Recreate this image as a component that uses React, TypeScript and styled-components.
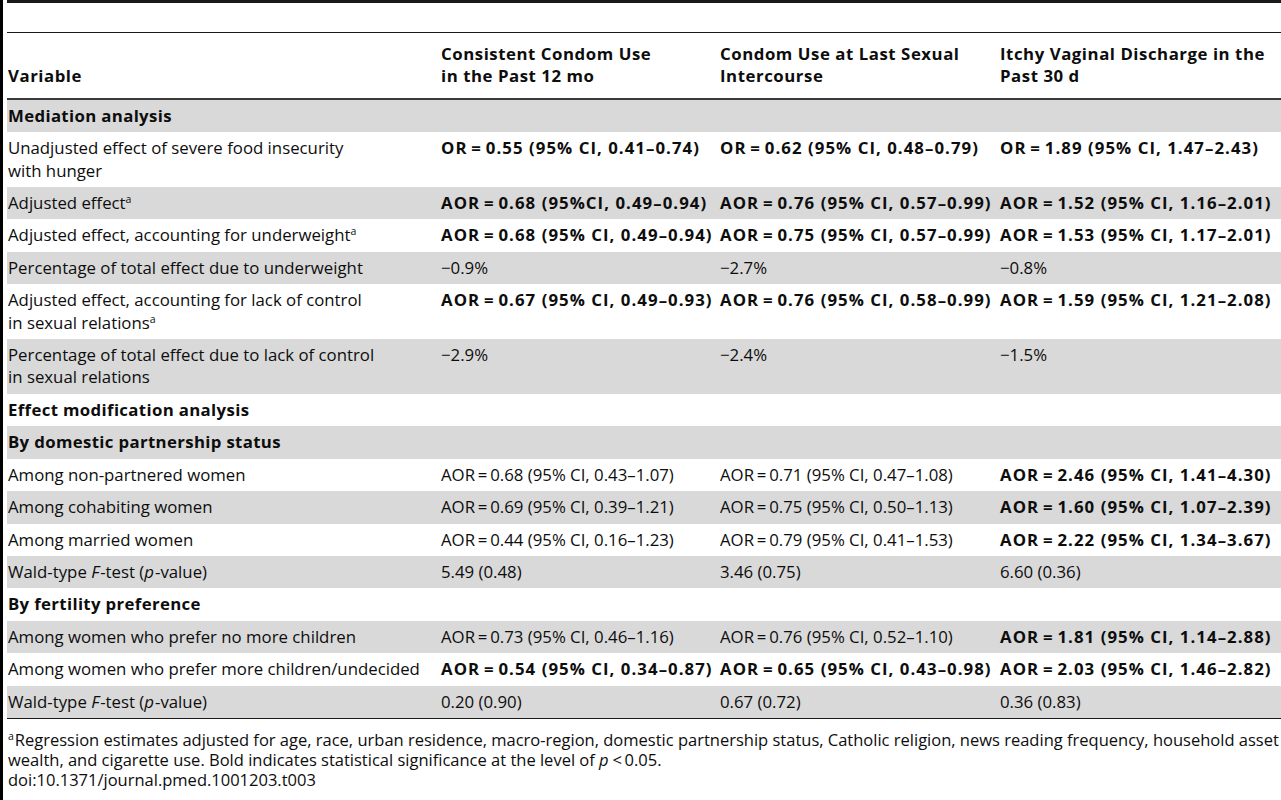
import styled, { createGlobalStyle } from 'styled-components';

const GlobalStyle = createGlobalStyle`
  html, body {
    margin: 0;
    padding: 0;
    background: #ffffff;
    overflow: hidden;
  }
  body {
    font-family: "Open Sans", "DejaVu Sans", sans-serif;
    color: #0d0d0d;
  }
`;

const Page = styled.div`
  border-left: 3px solid #000000;
  padding-left: 4px;
  min-height: 800px;
  box-sizing: border-box;
`;

const Table = styled.table`
  width: 1274px;
  border-collapse: collapse;
  table-layout: fixed;
  font-size: 16.8px;
  line-height: 22.4px;
  border-top: 3px solid #1a1a1a;
`;

const SpacerRow = styled.tr`
  height: 31px;
  border-bottom: 1.5px solid #1a1a1a;
`;

const HeadRow = styled.tr`
  border-bottom: 2px solid #3a3a3a;
`;

const HeadCell = styled.th`
  text-align: left;
  vertical-align: bottom;
  font-weight: 700;
  letter-spacing: 0.55px;
  padding: 10px 2px 10px 1px;
  white-space: nowrap;
`;

const Row = styled.tr<{ $shaded: boolean }>`
  background: ${p => (p.$shaded ? '#d9d9d9' : '#ffffff')};
  &:last-child {
    border-bottom: 1.5px solid #1a1a1a;
  }
`;

const Cell = styled.td<{ $bold?: boolean }>`
  vertical-align: top;
  padding: 5px 2px 5px 1px;
  font-weight: ${p => (p.$bold ? 700 : 400)};
  letter-spacing: ${p => (p.$bold ? '1.05px' : '0')};
  white-space: nowrap;
  overflow: hidden;
`;

const LabelCell = styled.td<{ $bold?: boolean }>`
  vertical-align: top;
  padding: 5px 2px 5px 1px;
  font-weight: ${p => (p.$bold ? 700 : 400)};
  letter-spacing: ${p => (p.$bold ? '0.35px' : '0')};
  white-space: nowrap;
`;

const Sup = styled.sup`
  font-size: 10.5px;
  line-height: 0;
  vertical-align: 6px;
  margin-right: 1px;
`;

const Footnotes = styled.div`
  font-size: 16.5px;
  line-height: 20px;
  padding: 11px 0 0 1px;
  width: 1276px;
`;

const Note = styled.div``;

const Em = styled.i`
  margin-right: 1px;
`;

const Doi = styled.div``;

type Value = { text: string; bold?: boolean };
type Data = {
  label: React.ReactNode;
  section?: boolean;
  values?: Value[];
};

const eq = '\u2009=\u2009';
const b = (t: string): Value => ({ text: t, bold: true });
const n = (t: string): Value => ({ text: t });
const A = <Sup>a</Sup>;
const wald = (
  <>
    Wald-type <Em>F</Em>-test (<Em>p</Em>-value)
  </>
);

const rows: Data[] = [
  { label: 'Mediation analysis', section: true },
  {
    label: (
      <>
        Unadjusted effect of severe food insecurity
        <br />
        with hunger
      </>
    ),
    values: [
      b(`OR${eq}0.55 (95% CI, 0.41–0.74)`),
      b(`OR${eq}0.62 (95% CI, 0.48–0.79)`),
      b(`OR${eq}1.89 (95% CI, 1.47–2.43)`),
    ],
  },
  {
    label: <>Adjusted effect{A}</>,
    values: [
      b(`AOR${eq}0.68 (95%CI, 0.49–0.94)`),
      b(`AOR${eq}0.76 (95% CI, 0.57–0.99)`),
      b(`AOR${eq}1.52 (95% CI, 1.16–2.01)`),
    ],
  },
  {
    label: <>Adjusted effect, accounting for underweight{A}</>,
    values: [
      b(`AOR${eq}0.68 (95% CI, 0.49–0.94)`),
      b(`AOR${eq}0.75 (95% CI, 0.57–0.99)`),
      b(`AOR${eq}1.53 (95% CI, 1.17–2.01)`),
    ],
  },
  {
    label: 'Percentage of total effect due to underweight',
    values: [n('−0.9%'), n('−2.7%'), n('−0.8%')],
  },
  {
    label: (
      <>
        Adjusted effect, accounting for lack of control
        <br />
        in sexual relations{A}
      </>
    ),
    values: [
      b(`AOR${eq}0.67 (95% CI, 0.49–0.93)`),
      b(`AOR${eq}0.76 (95% CI, 0.58–0.99)`),
      b(`AOR${eq}1.59 (95% CI, 1.21–2.08)`),
    ],
  },
  {
    label: (
      <>
        Percentage of total effect due to lack of control
        <br />
        in sexual relations
      </>
    ),
    values: [n('−2.9%'), n('−2.4%'), n('−1.5%')],
  },
  { label: 'Effect modification analysis', section: true },
  { label: 'By domestic partnership status', section: true },
  {
    label: 'Among non-partnered women',
    values: [
      n(`AOR${eq}0.68 (95% CI, 0.43–1.07)`),
      n(`AOR${eq}0.71 (95% CI, 0.47–1.08)`),
      b(`AOR${eq}2.46 (95% CI, 1.41–4.30)`),
    ],
  },
  {
    label: 'Among cohabiting women',
    values: [
      n(`AOR${eq}0.69 (95% CI, 0.39–1.21)`),
      n(`AOR${eq}0.75 (95% CI, 0.50–1.13)`),
      b(`AOR${eq}1.60 (95% CI, 1.07–2.39)`),
    ],
  },
  {
    label: 'Among married women',
    values: [
      n(`AOR${eq}0.44 (95% CI, 0.16–1.23)`),
      n(`AOR${eq}0.79 (95% CI, 0.41–1.53)`),
      b(`AOR${eq}2.22 (95% CI, 1.34–3.67)`),
    ],
  },
  { label: wald, values: [n('5.49 (0.48)'), n('3.46 (0.75)'), n('6.60 (0.36)')] },
  { label: 'By fertility preference', section: true },
  {
    label: 'Among women who prefer no more children',
    values: [
      n(`AOR${eq}0.73 (95% CI, 0.46–1.16)`),
      n(`AOR${eq}0.76 (95% CI, 0.52–1.10)`),
      b(`AOR${eq}1.81 (95% CI, 1.14–2.88)`),
    ],
  },
  {
    label: 'Among women who prefer more children/undecided',
    values: [
      b(`AOR${eq}0.54 (95% CI, 0.34–0.87)`),
      b(`AOR${eq}0.65 (95% CI, 0.43–0.98)`),
      b(`AOR${eq}2.03 (95% CI, 1.46–2.82)`),
    ],
  },
  { label: wald, values: [n('0.20 (0.90)'), n('0.67 (0.72)'), n('0.36 (0.83)')] },
];

const App = () => (
  <>
    <GlobalStyle />
    <Page>
      <Table>
        <colgroup>
          <col style={{ width: 433 }} />
          <col style={{ width: 279 }} />
          <col style={{ width: 280 }} />
          <col />
        </colgroup>
        <thead>
          <SpacerRow>
            <th colSpan={4} />
          </SpacerRow>
          <HeadRow>
            <HeadCell>Variable</HeadCell>
            <HeadCell>
              Consistent Condom Use
              <br />
              in the Past 12 mo
            </HeadCell>
            <HeadCell>
              Condom Use at Last Sexual
              <br />
              Intercourse
            </HeadCell>
            <HeadCell>
              Itchy Vaginal Discharge in the
              <br />
              Past 30 d
            </HeadCell>
          </HeadRow>
        </thead>
        <tbody>
          {rows.map((r, i) => (
            <Row key={i} $shaded={i % 2 === 0}>
              <LabelCell $bold={r.section}>{r.label}</LabelCell>
              {(r.values ?? [n(''), n(''), n('')]).map((v, j) => (
                <Cell key={j} $bold={v.bold}>
                  {v.text}
                </Cell>
              ))}
            </Row>
          ))}
        </tbody>
      </Table>
      <Footnotes>
        <Note>
          <Sup>a</Sup>Regression estimates adjusted for age, race, urban residence, macro-region, domestic
          partnership status, Catholic religion, news reading frequency, household asset wealth, and cigarette
          use. Bold indicates statistical significance at the level of <Em>p</Em>{'\u2009<\u2009'}0.05.
        </Note>
        <Doi>doi:10.1371/journal.pmed.1001203.t003</Doi>
      </Footnotes>
    </Page>
  </>
);

export default App;
